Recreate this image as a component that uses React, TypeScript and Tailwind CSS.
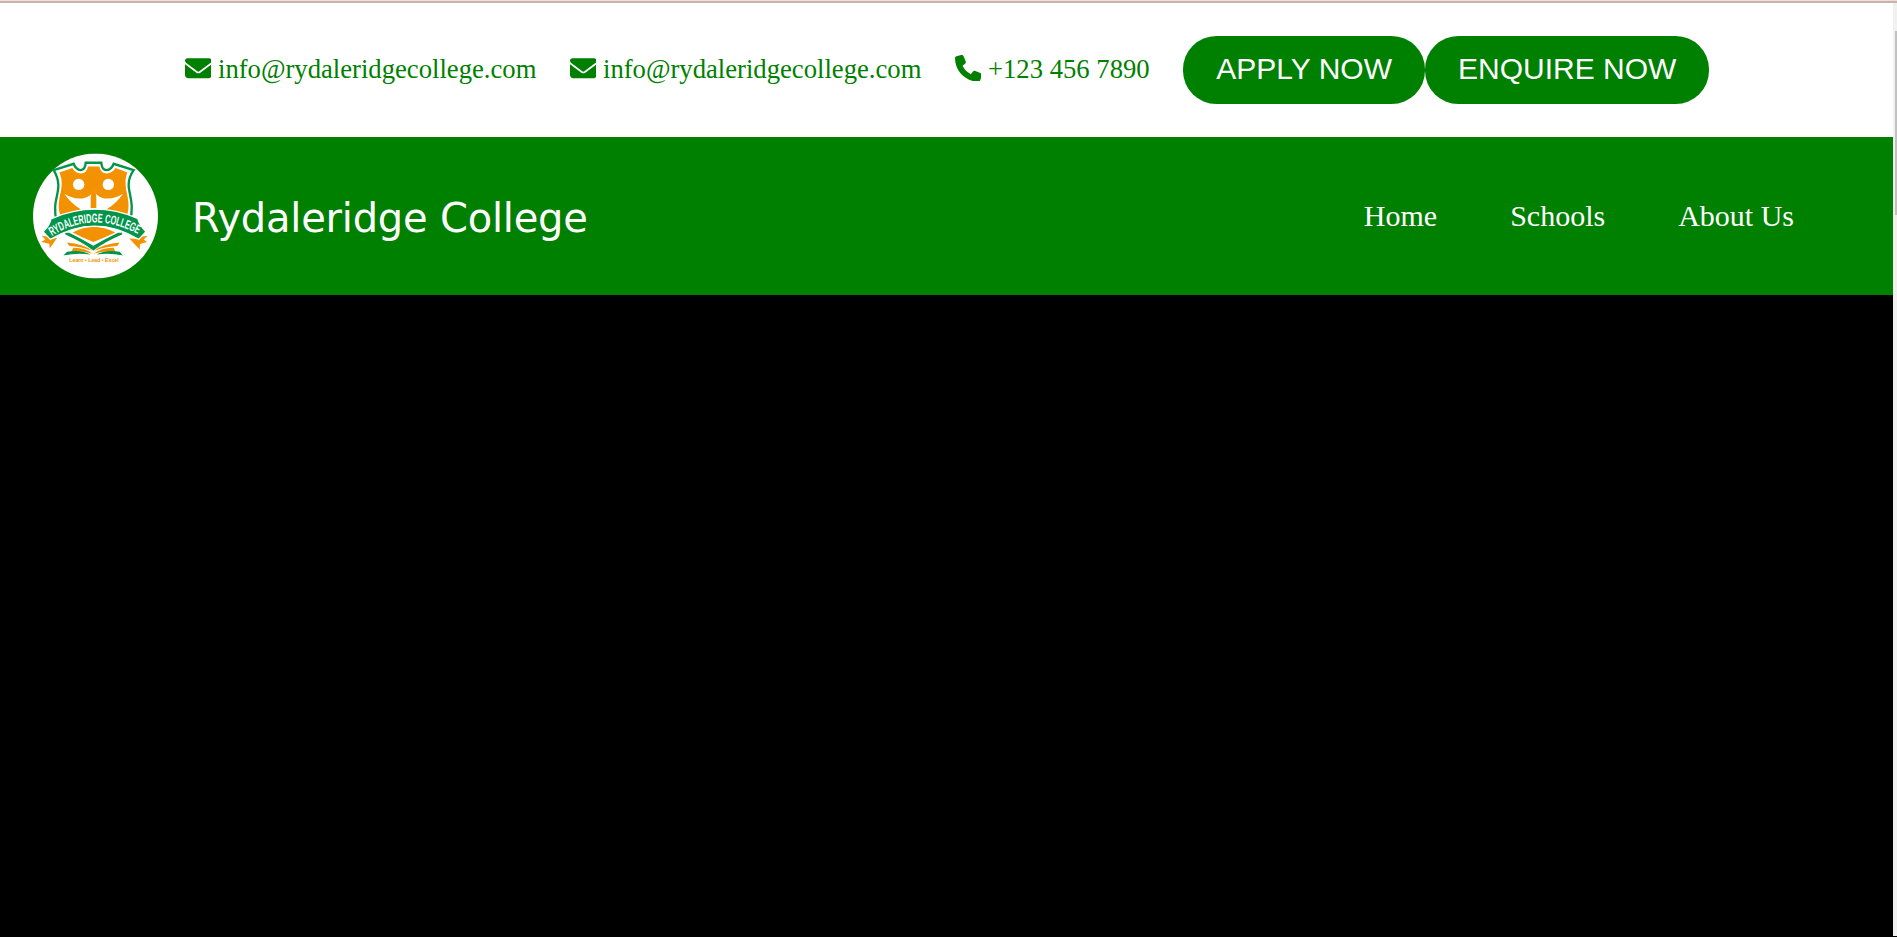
import { FaEnvelope, FaPhone } from "react-icons/fa6";

function Crest() {
  return (
    <svg viewBox="25 26.5 375 375" className="size-[125px] shrink-0 -translate-y-[0.4px]" role="img" aria-label="Rydaleridge College crest">
      <defs>
        <path id="motto-arc" d="M82 274 Q210 192 350 274" />
      </defs>
      <circle cx="212.5" cy="214" r="187.5" fill="#fff" />
      <path
        d="M183 54 H230 Q231 76 246 76 Q260 75 267 57 L327 76 Q312 97 312 120 C312 150 330 175 316 230 Q304 266 206 311 Q108 266 96 230 C82 175 103 150 101 120 Q100 97 87 76 L147 57 Q154 75 168 76 Q182 75 183 54 Z"
        fill="#fff"
        stroke="#00954a"
        strokeWidth="7"
      />
      <path
        d="M190 65 H224 Q228 85 246 86 Q263 86 273 70 L308 83 Q301 100 303 122 C305 150 318 172 308 210 H106 C96 172 109 150 111 122 Q112 100 104 83 L143 70 Q152 86 168 86 Q187 85 190 65 Z"
        fill="#f39200"
      />
      <circle cx="162" cy="119" r="17" fill="#fff" />
      <circle cx="251" cy="119" r="17" fill="#fff" />
      <path
        d="M119 147 Q145 164 174 161 Q193 158 203 145 L207 132 L212 145 Q223 159 240 161 Q269 164 295 147 Q277 174 247 193 V200 H167 V193 Q137 174 119 147 Z"
        fill="#fff"
      />
      <path d="M207 131 Q216 145 215 158 V190 H198 V158 Q198 145 207 131 Z" fill="#f39200" />
      <path d="M85 262 Q210 205 334 262 Q290 276 206 316 Q125 276 85 262 Z" fill="#fff" />
      <path d="M144 263 Q206 231 272 263 Q240 278 206 292 Q172 278 144 263 Z" fill="#f39200" />
      <path d="M122 264 L134 264 Q174 284 206 303 Q238 284 280 264 L292 264 V269 Q238 292 206 317 Q174 292 122 269 Z" fill="#00954a" />
      <path d="M51 273 L68 275 L78 283 L97 280 L75 311 L74 297 L50 292 L62 284 Z" fill="#f39200" />
      <path d="M369 273 L352 275 L342 283 L314 281 L345 314 L346 298 L367 292 L357 284 Z" fill="#f39200" />
      <path
        d="M55 261 Q76 242 79 222 Q210 165 339 221 Q345 242 364 261 L342 284 Q211 204 77 284 Z"
        fill="#00954a"
        stroke="#fff"
        strokeWidth="4"
      />
      <text fill="#fff" fontFamily="Liberation Sans Narrow, Liberation Sans, sans-serif" fontWeight="700" fontSize="38">
        <textPath href="#motto-arc" startOffset="0" textLength="272" lengthAdjust="spacingAndGlyphs">
          RYDALERIDGE COLLEGE
        </textPath>
      </text>
      <path d="M127 293 Q176 296 204 319 Q170 306 134 304 Z M285 293 Q236 296 207 319 Q243 306 278 304 Z" fill="#f39200" />
      <path d="M146 309 Q180 308 204 327 Q166 316 138 323 Z M266 309 Q232 308 207 327 Q246 316 274 323 Z" fill="#f39200" />
      <path d="M127 321 Q169 313 197 329 Q157 323 116 332 Z M285 321 Q244 313 216 329 Q255 323 295 332 Z" fill="#00954a" />
      <text
        x="134"
        y="353"
        fill="#f39200"
        fontFamily="Liberation Sans, sans-serif"
        fontWeight="700"
        fontSize="16"
        textLength="148"
        lengthAdjust="spacingAndGlyphs"
      >
        Learn • Lead • Excel
      </text>
    </svg>
  );
}

const contacts = [
  { icon: FaEnvelope, label: "info@rydaleridgecollege.com" },
  { icon: FaEnvelope, label: "info@rydaleridgecollege.com" },
  { icon: FaPhone, label: "+123 456 7890" },
];

export default function App() {
  return (
    <div className="flex h-[937px] flex-col overflow-hidden bg-black">
      <div className="h-px shrink-0 bg-[#f5dcd6]" />
      <div className="h-0.5 shrink-0 bg-[#c8b4ae]" />
      <div className="flex h-[933px] shrink-0">
        <div className="flex w-[1893px] shrink-0 flex-col">
          <div className="flex h-[134px] shrink-0 items-center bg-white pl-[184.7px] font-['Liberation_Serif',serif] text-[26.67px] text-[#008000]">
            {contacts.map(({ icon: Icon, label }, i) => (
              <a key={i} className="mr-[33.3px] flex items-center whitespace-nowrap pb-0.5">
                <Icon className="mr-[6.67px] size-[26.67px] -translate-y-px" />
                {label}
              </a>
            ))}
            <button className="h-[68px] w-[242.4px] rounded-[33.33px] bg-[#008000] pb-[3px] font-['Liberation_Sans',sans-serif] text-[30px] whitespace-nowrap text-white">
              APPLY NOW
            </button>
            <button className="h-[68px] w-[283.6px] rounded-[33.33px] bg-[#008000] pb-[3px] font-['Liberation_Sans',sans-serif] text-[30px] whitespace-nowrap text-white">
              ENQUIRE NOW
            </button>
          </div>
          <header className="flex h-[158px] shrink-0 items-center bg-[#008000] pr-[99px] pl-[33px] text-white">
            <Crest />
            <h1 className="ml-[34px] pt-[3px] font-['Verdana','DejaVu_Sans',sans-serif] text-[40px] tracking-[-0.22px] whitespace-nowrap">
              Rydaleridge College
            </h1>
            <nav className="ml-auto flex gap-[73px] pb-0.5 font-['Liberation_Serif',serif] text-[30px] whitespace-nowrap">
              <a>Home</a>
              <a>Schools</a>
              <a>About Us</a>
            </nav>
          </header>
          <main className="grow bg-black" />
        </div>
        <div className="flex w-1 flex-col items-end bg-[#f1f1f1] pt-7">
          <div className="h-[184px] w-0.5 bg-[#c1c1c1]" />
        </div>
      </div>
    </div>
  );
}
